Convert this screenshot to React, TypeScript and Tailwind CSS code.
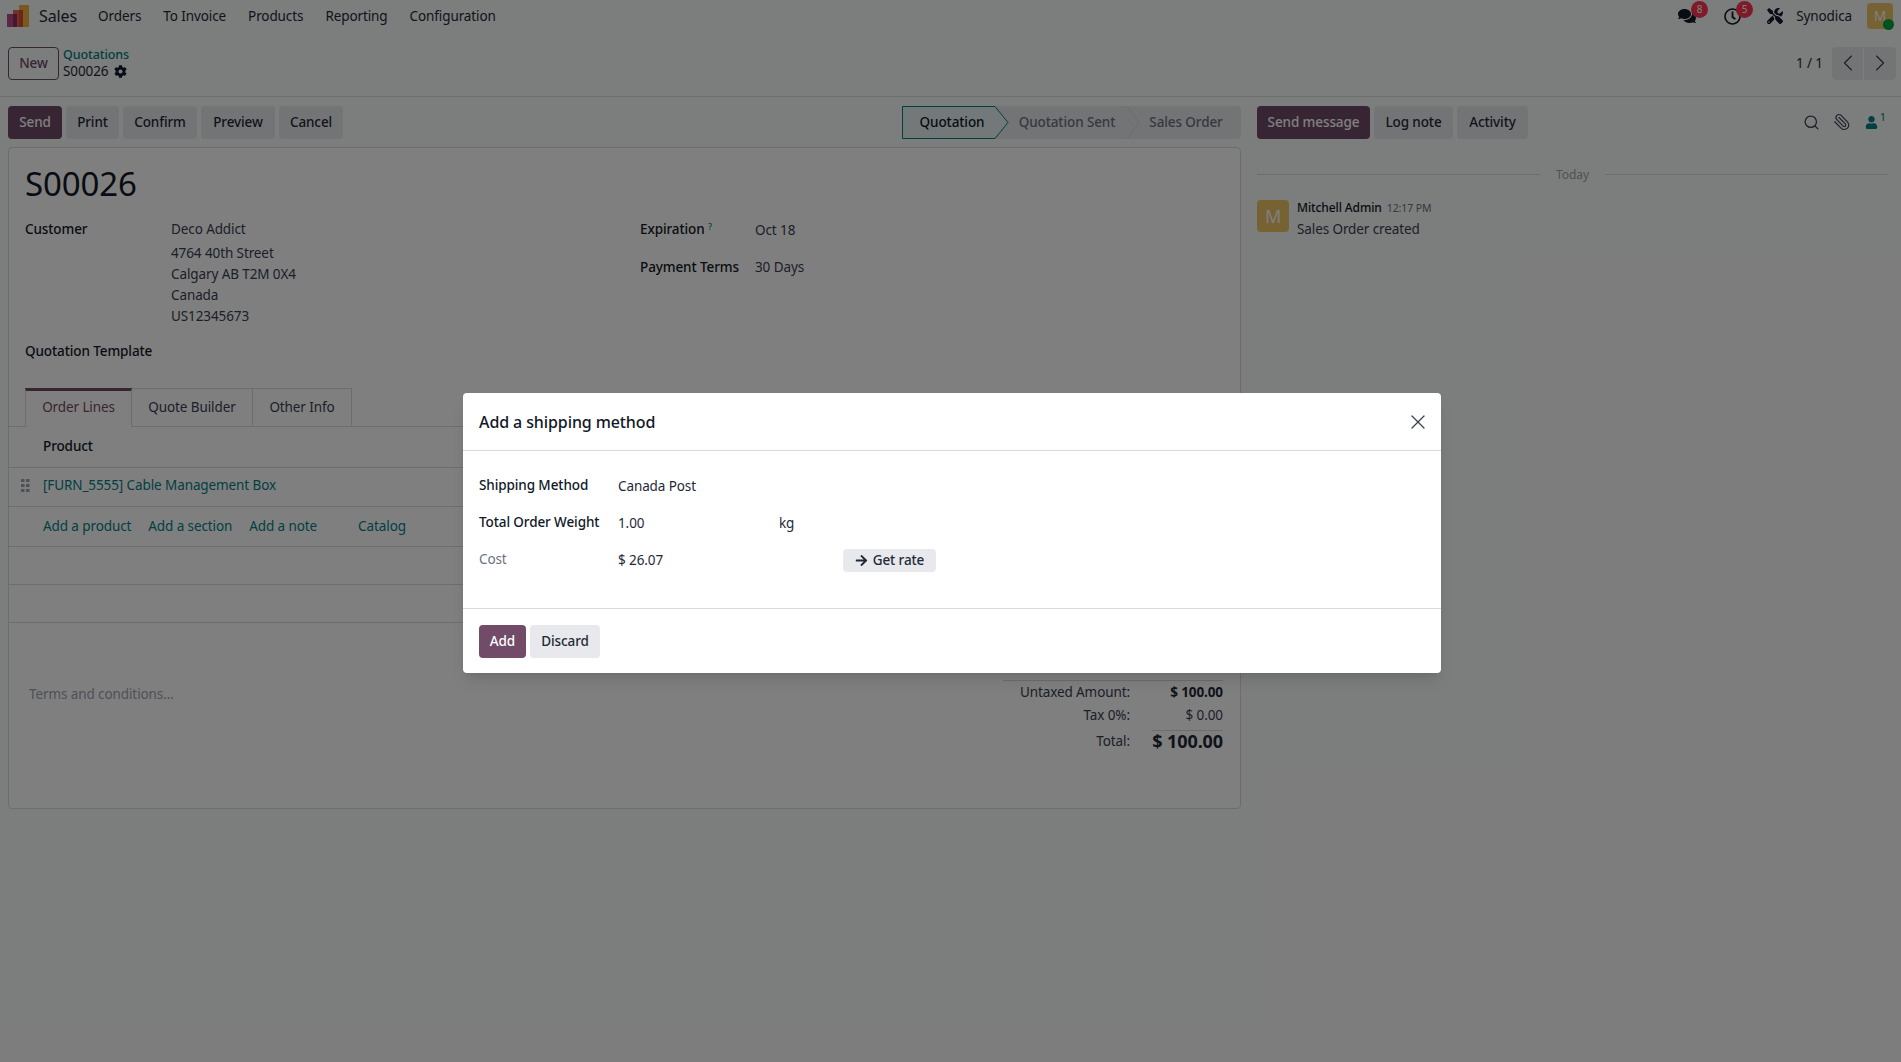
import { FaCog, FaComments, FaRegClock, FaTools, FaUser, FaArrowRight } from "react-icons/fa";
import { ChevronLeft, ChevronRight, Paperclip, Search, X } from "lucide-react";

const navItems = ["Orders", "To Invoice", "Products", "Reporting", "Configuration"];
const actions = ["Print", "Confirm", "Preview", "Cancel"];

function GreyButton({ label, className = "" }: { label: string; className?: string }) {
  return (
    <button className={`h-[33px] rounded bg-[#e7e9ed] font-medium text-[#1f2937] ${className}`}>{label}</button>
  );
}

function Logo() {
  return (
    <svg width="23" height="22" viewBox="0 0 23 22">
      <rect x="12" y="0" width="10" height="22" fill="#f2b33d" />
      <rect x="6" y="5" width="10" height="17" fill="#e8654d" />
      <rect x="12" y="5" width="4" height="17" fill="#d2502f" />
      <rect x="0" y="9" width="10" height="13" fill="#b84c8c" />
      <rect x="6" y="9" width="4" height="13" fill="#8f2f5c" />
    </svg>
  );
}

function Grip() {
  return (
    <svg width="9" height="13" viewBox="0 0 9 13" fill="#9ca3af">
      <rect x="0" y="0" width="3.5" height="3" />
      <rect x="5" y="0" width="3.5" height="3" />
      <rect x="0" y="5" width="3.5" height="3" />
      <rect x="5" y="5" width="3.5" height="3" />
      <rect x="0" y="10" width="3.5" height="3" />
      <rect x="5" y="10" width="3.5" height="3" />
    </svg>
  );
}

export default function App() {
  return (
    <div className="relative h-[1062px] overflow-hidden bg-[#f9fafb] font-['Noto_Sans',sans-serif] text-[13.5px] leading-[21px] tracking-[-0.1px] text-[#374151]">
      {/* Top nav */}
      <header className="flex h-[32px] items-center pl-[7px] pr-[8px]">
        <Logo />
        <span className="ml-[9px] text-[16px] text-[#1f2937]">Sales</span>
        <nav className="ml-[21px] flex gap-[22px] text-[#1f2937]">
          {navItems.map((item) => (
            <span key={item}>{item}</span>
          ))}
        </nav>
        <div className="ml-auto flex items-center">
          <div className="relative mr-[28px]">
            <FaComments className="h-[18px] w-[18px] text-[#111827]" />
            <span className="absolute -right-[12px] -top-[6px] flex h-[17px] w-[17px] items-center justify-center rounded-full bg-[#ff3550] text-[10px] text-white">8</span>
          </div>
          <div className="relative mr-[26px]">
            <FaRegClock className="h-[17px] w-[17px] text-[#111827]" />
            <span className="absolute -right-[12px] -top-[7px] flex h-[17px] w-[17px] items-center justify-center rounded-full bg-[#ff3550] text-[10px] text-white">5</span>
          </div>
          <FaTools className="mr-[13px] h-[16px] w-[16px] text-[#111827]" />
          <span className="mr-[15px] text-[#1f2937]">Synodica</span>
          <div className="relative flex h-[26px] w-[26px] items-center justify-center rounded bg-[#ecc465] text-white">
            M
            <span className="absolute -bottom-px -right-px h-[11px] w-[11px] rounded-full bg-[#00a63e]" />
          </div>
        </div>
      </header>

      {/* Control panel */}
      <div className="flex h-[65px] items-center border-b border-[#d8dadd] pb-[2px] pl-[8px] pr-[5px]">
        <button className="h-[33px] w-[51px] rounded border border-[#714b67] font-medium text-[#714b67]">New</button>
        <div className="ml-[4px] flex flex-col leading-[16px]">
          <span className="text-[12.5px] font-medium text-[#017e84]">Quotations</span>
          <span className="flex items-center gap-[6px] text-[#1f2937]">
            S00026 <FaCog className="h-[13px] w-[13px] text-[#111827]" />
          </span>
        </div>
        <span className="ml-auto mr-[9px] text-[#1f2937]">1 / 1</span>
        <div className="flex h-[33px] overflow-hidden rounded bg-[#e7e9ed] text-[#374151]">
          <div className="flex w-[32px] items-center justify-center border-r border-[#f9fafb]">
            <ChevronLeft className="h-[28px] w-[28px]" strokeWidth={1} />
          </div>
          <div className="flex w-[32px] items-center justify-center">
            <ChevronRight className="h-[28px] w-[28px]" strokeWidth={1} />
          </div>
        </div>
      </div>

      <div className="flex">
        {/* Form side */}
        <div className="w-[1241px] shrink-0 pl-[8px]">
          <div className="flex h-[50px] items-center">
            <button className="h-[33px] w-[54px] rounded bg-[#714b67] font-medium text-white">Send</button>
            <div className="ml-[4px] flex gap-[4px]">
              <GreyButton label={actions[0]} className="w-[53px]" />
              <GreyButton label={actions[1]} className="w-[74px]" />
              <GreyButton label={actions[2]} className="w-[74px]" />
              <GreyButton label={actions[3]} className="w-[64px]" />
            </div>
            <div className="ml-auto flex h-[33px] w-[339px] items-stretch rounded-r bg-[#e7e9ed] text-[#6b7280]">
              <div className="relative flex w-[107px] items-center justify-center">
                <svg className="absolute inset-0" width="107" height="33" viewBox="0 0 107 33">
                  <path d="M0.5 0.5H93L106 16.5L93 32.5H0.5Z" fill="#e6f2f3" stroke="#017e84" />
                </svg>
                <span className="relative pr-[7px] font-medium text-[#111827]">Quotation</span>
              </div>
              <div className="relative flex w-[131px] items-center justify-center pr-[15px]">
                <span className="font-medium">Quotation Sent</span>
                <svg className="absolute right-0 top-0" width="14" height="33" viewBox="0 0 14 33">
                  <path d="M1 0L13 16.5L1 33" fill="none" stroke="#d1d5db" />
                </svg>
              </div>
              <div className="flex flex-1 items-center justify-center pr-[9px] font-medium">Sales Order</div>
            </div>
          </div>

          {/* Sheet */}
          <div className="h-[662px] rounded-sm border border-[#d8dadd] bg-white">
            <h1 className="ml-[16px] mt-[16px] text-[33px] leading-[40px] text-[#111827]">S00026</h1>
            <div className="ml-[16px] mt-[15px] flex">
              <div className="flex w-[615px]">
                <span className="w-[146px] font-medium text-[#111827]">Customer</span>
                <div className="flex flex-col">
                  <span className="mb-[3px]">Deco Addict</span>
                  <span>4764 40th Street</span>
                  <span>Calgary AB T2M 0X4</span>
                  <span>Canada</span>
                  <span>US12345673</span>
                </div>
              </div>
              <div className="flex flex-col gap-[16px]">
                <div className="flex">
                  <span className="w-[115px] font-medium text-[#111827]">
                    Expiration <sup className="text-[9px] text-[#017e84]">?</sup>
                  </span>
                  <span className="mt-px">Oct 18</span>
                </div>
                <div className="flex">
                  <span className="w-[115px] font-medium text-[#111827]">Payment Terms</span>
                  <span>30 Days</span>
                </div>
              </div>
            </div>
            <div className="ml-[16px] mt-[14px] font-medium text-[#111827]">Quotation Template</div>

            {/* Tabs */}
            <div className="mt-[26px] flex h-[39px] items-end border-b border-[#d8dadd] pl-[16px]">
              <div className="-mb-px flex h-[39px] w-[107px] items-center justify-center border-x border-[#d8dadd] border-t-[3px] border-t-[#714b67] bg-white pb-[3px] text-[#714b67]">Order Lines</div>
              <div className="flex h-[38px] w-[121px] items-center justify-center border-r border-t border-[#d8dadd]">Quote Builder</div>
              <div className="flex h-[38px] w-[99px] items-center justify-center border-r border-t border-[#d8dadd]">Other Info</div>
            </div>
            <div className="flex h-[41px] items-center border-b border-[#d8dadd] pb-[2px] pl-[34px] font-medium text-[#111827]">Product</div>
            <div className="flex h-[39px] items-center border-b border-[#d8dadd] pb-[3px] pl-[12px] text-[#017e84]">
              <Grip />
              <span className="ml-[13px]">[FURN_5555] Cable Management Box</span>
            </div>
            <div className="flex h-[40px] items-center border-b border-[#d8dadd] pl-[34px] text-[#017e84]">
              <span>Add a product</span>
              <span className="ml-[17px]">Add a section</span>
              <span className="ml-[17px]">Add a note</span>
              <span className="ml-[41px]">Catalog</span>
            </div>
            <div className="h-[38px] border-b border-[#d8dadd]" />
            <div className="h-[38px] border-b border-[#d8dadd]" />

            {/* Notes and totals */}
            <div className="flex justify-between pr-[17px]">
              <div className="ml-[20px] mt-[61px] text-[#9ca3af]">Terms and conditions...</div>
              <div className="mt-[57px] w-[220px] border-t border-[#d8dadd]">
                <div className="flex h-[22px] items-center justify-between">
                  <span className="w-[127px] text-right">Untaxed Amount:</span>
                  <span className="font-bold text-[#1f2937]">$ 100.00</span>
                </div>
                <div className="flex h-[24px] items-center justify-between">
                  <span className="w-[127px] text-right">Tax 0%:</span>
                  <span>$ 0.00</span>
                </div>
                <div className="ml-[149px] mt-[3px] border-t border-[#d8dadd]" />
                <div className="flex h-[20px] items-center justify-between">
                  <span className="w-[127px] text-right">Total:</span>
                  <span className="text-[18px] font-bold text-[#1f2937]">$ 100.00</span>
                </div>
              </div>
            </div>
          </div>
        </div>

        {/* Chatter */}
        <aside className="flex-1 pl-[16px] pr-[13px]">
          <div className="flex h-[50px] items-center">
            <button className="h-[33px] w-[113px] rounded bg-[#714b67] font-medium text-white">Send message</button>
            <GreyButton label="Log note" className="ml-[4px] w-[79px]" />
            <GreyButton label="Activity" className="ml-[4px] w-[71px]" />
            <div className="ml-auto flex items-center text-[#374151]">
              <Search className="h-[17px] w-[17px]" strokeWidth={1.75} />
              <Paperclip className="ml-[13px] h-[18px] w-[18px] -scale-x-100" strokeWidth={1.5} />
              <span className="relative ml-[14px] mr-[10px] text-[#017e84]">
                <FaUser className="h-[13px] w-[13px]" />
                <span className="absolute -right-[8px] -top-[10px] text-[11px]">1</span>
              </span>
            </div>
          </div>
          <div className="mt-[17px] flex items-center gap-[16px] text-[12px] text-[#9ca3af]">
            <div className="h-px flex-1 bg-[#d8dadd]" />
            Today
            <div className="h-px flex-1 bg-[#d8dadd]" />
          </div>
          <div className="mt-[15px] flex">
            <div className="flex h-[32px] w-[32px] items-center justify-center rounded bg-[#ecc465] text-[18px] text-white">M</div>
            <div className="-mt-[1px] ml-[8px]">
              <div className="flex items-baseline gap-[5px] text-[12px] leading-[18px]">
                <span className="font-medium text-[#111827]">Mitchell Admin</span>
                <span className="text-[10.5px] text-[#6b7280]">12:17 PM</span>
              </div>
              <div className="mt-[2px]">Sales Order created</div>
            </div>
          </div>
        </aside>
      </div>

      {/* Dialog */}
      <div className="absolute inset-0 bg-black/50">
        <div className="ml-[463px] mt-[393px] w-[978px] rounded-sm bg-white text-[#1f2937] shadow-lg">
          <div className="flex h-[58px] items-center justify-between border-b border-[#d8dadd] pl-[16px] pr-[11px]">
            <h2 className="pt-px text-[16px] font-medium text-[#111827]">Add a shipping method</h2>
            <X className="h-[24px] w-[24px] text-[#374151]" strokeWidth={1.25} />
          </div>
          <div className="h-[158px] border-b border-[#d8dadd] pl-[16px] pt-[24px]">
            <div className="flex h-[37px]">
              <span className="w-[139px] font-medium text-[#111827]">Shipping Method</span>
              <span className="mt-px">Canada Post</span>
            </div>
            <div className="flex h-[37px]">
              <span className="w-[139px] font-medium text-[#111827]">Total Order Weight</span>
              <span className="mt-px w-[161px]">1.00</span>
              <span className="mt-px">kg</span>
            </div>
            <div className="flex h-[37px]">
              <span className="w-[139px] text-[#6b7280]">Cost</span>
              <span className="mt-px w-[225px]">$ 26.07</span>
              <button className="flex h-[23px] w-[93px] items-center justify-center gap-[5px] rounded bg-[#e7e9ed] font-medium">
                <FaArrowRight className="h-[13px] w-[13px]" /> Get rate
              </button>
            </div>
          </div>
          <div className="flex h-[64px] items-center gap-[4px] pl-[16px]">
            <button className="h-[33px] w-[47px] rounded bg-[#714b67] font-medium text-white">Add</button>
            <GreyButton label="Discard" className="w-[70px]" />
          </div>
        </div>
      </div>
    </div>
  );
}
